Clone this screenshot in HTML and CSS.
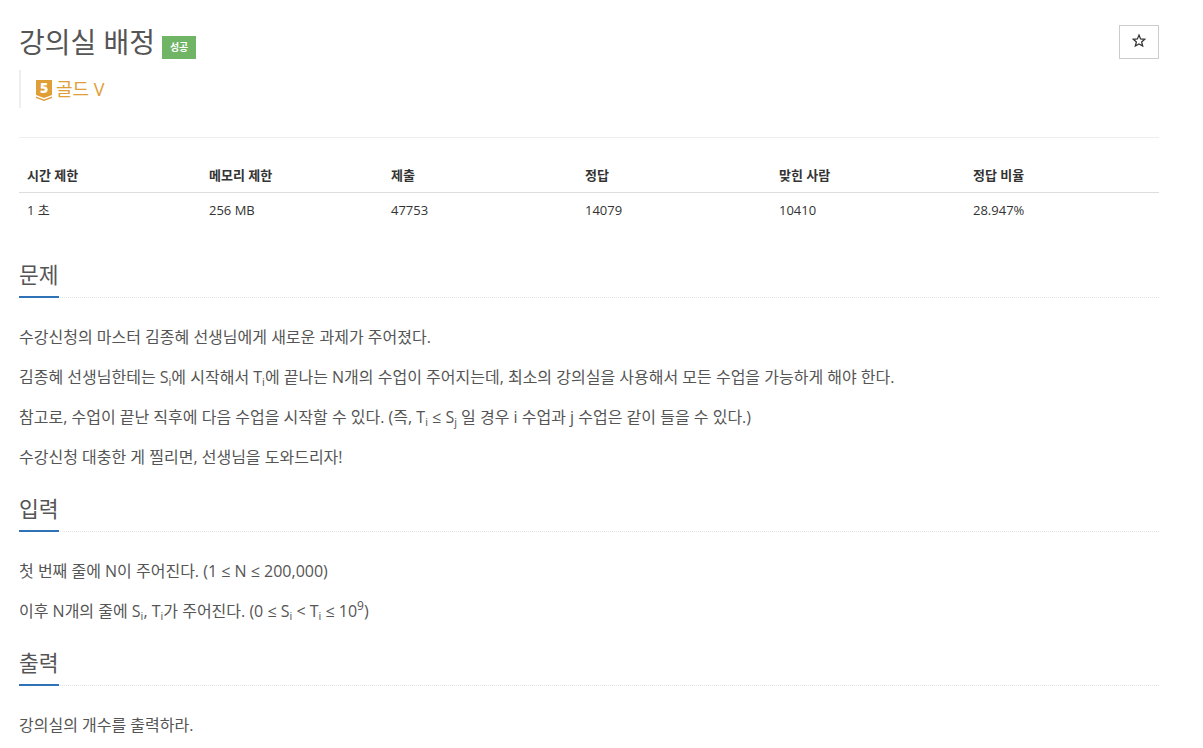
FILE: index.html
```html
<!DOCTYPE html>
<html lang="ko">
<head>
<meta charset="utf-8">
<title>강의실 배정</title>
<link rel="stylesheet" href="styles.css">
</head>
<body>
<main class="page">
  <header class="title-head">
    <div class="title-main">
      <h1 class="title">강의실 배정</h1>
      <span class="badge">성공</span>
    </div>
    <button class="star-btn" type="button">
      <svg width="16" height="16" viewBox="0 0 14 14"><path d="M7 1.8 8.4 5.2 12 5.5 9.3 7.8 10.2 11.4 7 9.5 3.8 11.4 4.7 7.8 2 5.5 5.6 5.2Z" fill="none" stroke="#333" stroke-width="1.1"/></svg>
    </button>
  </header>
  <div class="tier">
    <svg class="tier-icon" width="16" height="21" viewBox="0 0 16 21"><path d="M0 0H16V15L8 18 0 15Z" fill="#e09e37"/><path d="M0 16.5 8 19.5 16 16.5V18L8 21 0 18Z" fill="#e09e37"/></svg>
    <span class="tier-num">5</span>
    <span class="tier-name">골드 V</span>
  </div>
  <hr class="divider">
  <table class="stats">
    <thead>
      <tr><th class="col-a">시간 제한</th><th class="col-a">메모리 제한</th><th class="col-b">제출</th><th class="col-b">정답</th><th class="col-b">맞힌 사람</th><th class="col-b">정답 비율</th></tr>
    </thead>
    <tbody>
      <tr><td>1 초</td><td>256 MB</td><td>47753</td><td>14079</td><td>10410</td><td>28.947%</td></tr>
    </tbody>
  </table>
  <section class="sec">
    <h2 class="sec-title"><span>문제</span></h2>
    <div class="sec-body">
      <p>수강신청의 마스터 김종혜 선생님에게 새로운 과제가 주어졌다.</p>
      <p>김종혜 선생님한테는 S<sub>i</sub>에 시작해서 T<sub>i</sub>에 끝나는 N개의 수업이 주어지는데, 최소의 강의실을 사용해서 모든 수업을 가능하게 해야 한다.</p>
      <p>참고로, 수업이 끝난 직후에 다음 수업을 시작할 수 있다. (즉, T<sub>i</sub> ≤ S<sub>j</sub> 일 경우 i 수업과 j 수업은 같이 들을 수 있다.)</p>
      <p>수강신청 대충한 게 찔리면, 선생님을 도와드리자!</p>
    </div>
  </section>
  <section class="sec">
    <h2 class="sec-title"><span>입력</span></h2>
    <div class="sec-body">
      <p>첫 번째 줄에 N이 주어진다. (1 ≤ N ≤ 200,000)</p>
      <p>이후 N개의 줄에 S<sub>i</sub>, T<sub>i</sub>가 주어진다. (0 ≤ S<sub>i</sub> &lt; T<sub>i</sub> ≤ 10<sup>9</sup>)</p>
    </div>
  </section>
  <section class="sec">
    <h2 class="sec-title"><span>출력</span></h2>
    <div class="sec-body">
      <p>강의실의 개수를 출력하라.</p>
    </div>
  </section>
</main>
</body>
</html>
```
FILE: styles.css
```css
* { box-sizing: border-box; }
html, body { margin: 0; padding: 0; height: 748px; overflow: hidden; background: #fff; }
body {
  font-family: "Open Sans", "Noto Sans CJK KR", sans-serif;
  color: #555;
  font-size: 14px;
  line-height: 20px;
}
.page { width: 1140px; margin-left: 19px; }
.title-head { display: flex; justify-content: space-between; align-items: flex-start; padding-top: 25px; }
.title-main { display: flex; align-items: flex-end; gap: 7px; }
.title { margin: 0; font-size: 28px; font-weight: 400; line-height: 34px; color: #555; }
.badge {
  width: 34px; height: 23px; background: #70b466; color: #fff;
  font-size: 10px; font-weight: 700; line-height: 23px; text-align: center;
}
.star-btn {
  width: 40px; height: 34px; padding: 0 1px 2px 0; background: #fff;
  border: 1px solid #ccc; display: flex; align-items: center; justify-content: center;
}
.tier {
  position: relative; display: flex; align-items: center; height: 38px; margin-top: 11px;
  border-left: 2px solid #eee; padding-left: 15px; color: #e09e37;
}
.tier-icon { flex: none; margin: 3px 4px 0 0; }
.tier-num {
  position: absolute; left: 15px; top: 10px; width: 16px; text-align: center;
  font-size: 14px; line-height: 16px; font-weight: 800; color: #fff;
}
.tier-name { font-size: 18px; line-height: 24px; color: #e09e37; }
.divider { border: 0; border-top: 1px solid #eee; margin: 29px 0 20px; }
.stats { width: 100%; border-collapse: collapse; table-layout: fixed; font-size: 13px; color: #333; margin-bottom: 27px; }
.stats th { font-weight: 700; text-align: left; padding: 8px; line-height: 18px; border-bottom: 1px solid #ddd; }
.stats td { padding: 8px; line-height: 18px; }
.col-a { width: 182px; }
.col-b { width: 194px; }
.sec + .sec { margin-top: 19px; }
.sec-title {
  margin: 0; height: 44px; font-size: 21.5px; font-weight: 400; line-height: 30px; color: #555;
  border-bottom: 1px dotted #e3e3e3; position: relative;
}
.sec-title span { display: block; width: 40px; height: 44px; padding-top: 6px; border-bottom: 2px solid #2f72b5; white-space: nowrap; }
.sec-body { padding-top: 27px; }
.sec-body p { margin: 0 0 16px; font-size: 16px; line-height: 24px; color: #555; }
sub, sup { line-height: 0; position: relative; vertical-align: baseline; }
sub { font-size: 11px; bottom: -3px; }
sup { font-size: 12px; top: -7px; }
```
